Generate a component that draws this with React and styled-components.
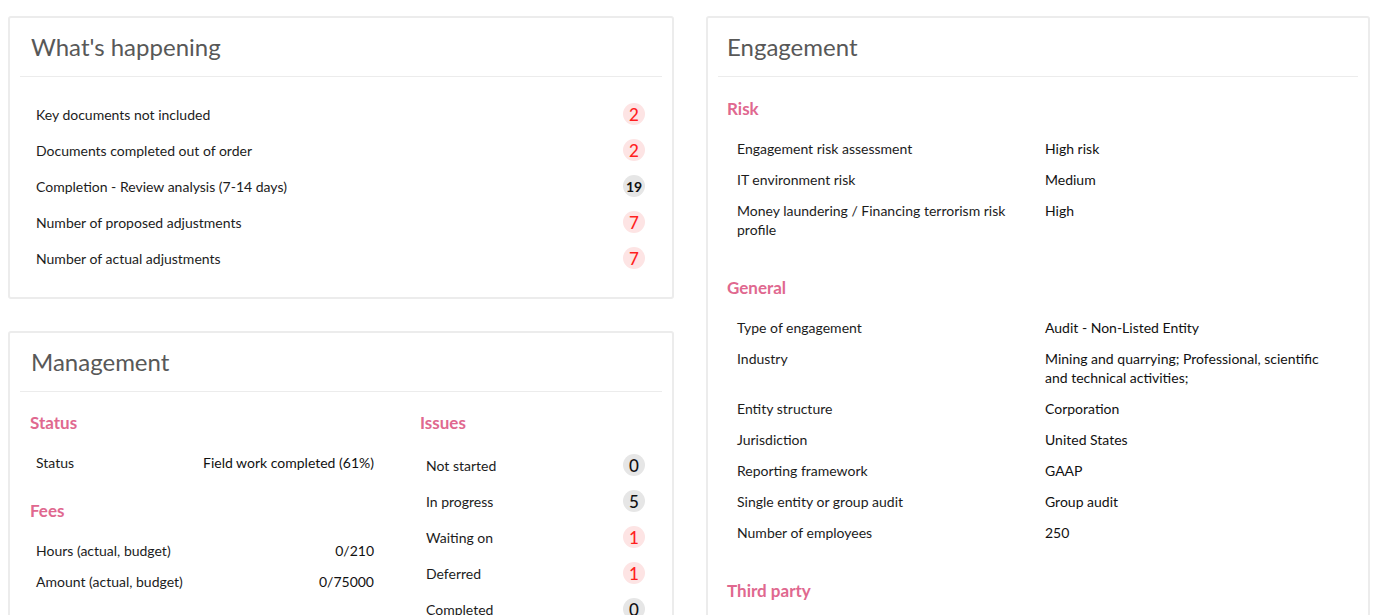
import React from 'react';
import styled, { createGlobalStyle, css } from 'styled-components';

const GlobalStyle = createGlobalStyle`
  body {
    margin: 0;
    background: #fff;
    font-family: Lato, "Open Sans", sans-serif;
    color: #1c1c1c;
  }
`;

const Page = styled.div`
  display: grid;
  grid-template-columns: 666px 664px;
  column-gap: 32px;
  padding: 16px 0 0 8px;
  align-items: start;
`;

const Column = styled.div`
  display: flex;
  flex-direction: column;
  gap: 32px;
`;

const Card = styled.section`
  border: 2px solid #ececec;
  border-radius: 3px;
  background: #fff;
  padding: 0 10px;
`;

const CardHeader = styled.header`
  height: 58px;
  display: flex;
  align-items: center;
  padding: 0 ${({ $indent }) => $indent || '11px'};
  border-bottom: 1px solid #ececec;
`;

const CardTitle = styled.h2`
  margin: 0 0 2px;
  font-size: 24px;
  font-weight: 400;
  color: #585858;
`;

const CardBody = styled.div`
  padding: ${({ $pad }) => $pad || '19px 0 21px'};
`;

const ListRow = styled.div`
  display: flex;
  align-items: center;
  justify-content: space-between;
  height: 36px;
  padding: ${({ $inset }) => $inset || '0 17px 0 16px'};
  font-size: 14px;
`;

const Badge = styled.span`
  width: 22px;
  height: 22px;
  border-radius: 50%;
  display: inline-flex;
  align-items: center;
  justify-content: center;
  font-size: ${({ $small }) => ($small ? '14px' : '17px')};
  font-weight: ${({ $small }) => ($small ? 700 : 500)};
  ${({ $alert }) =>
    $alert
      ? css`
          background: #fde4e4;
          color: #ff1f1f;
        `
      : css`
          background: #e6e6e6;
          color: #111;
        `}
`;

const SectionHeading = styled.h3`
  margin: ${({ $top }) => $top || '20px'} 0 12px;
  padding-left: ${({ $indent }) => $indent || '10px'};
  font-size: 17px;
  line-height: 24px;
  font-weight: 700;
  color: #e0688f;
`;

const TwoCols = styled.div`
  display: grid;
  grid-template-columns: 350px 1fr;
  column-gap: 40px;
  padding: 0 10px 0 10px;
`;

const InfoRow = styled.div`
  display: flex;
  justify-content: space-between;
  padding: 6px 6px;
  font-size: 14px;
  line-height: 19px;
`;

const Value = styled.span`
  color: #111;
`;

const DetailRow = styled.div`
  display: grid;
  grid-template-columns: 300px 1fr;
  column-gap: 8px;
  padding: 6px 20px 6px 19px;
  font-size: 14px;
  line-height: 19px;
`;

const Section = styled.div`
  padding-bottom: ${({ $gap }) => $gap || '11px'};
`;

const happenings = [
  { label: 'Key documents not included', count: 2, alert: true },
  { label: 'Documents completed out of order', count: 2, alert: true },
  { label: 'Completion - Review analysis (7-14 days)', count: 19, alert: false },
  { label: 'Number of proposed adjustments', count: 7, alert: true },
  { label: 'Number of actual adjustments', count: 7, alert: true },
];

const issues = [
  { label: 'Not started', count: 0, alert: false },
  { label: 'In progress', count: 5, alert: false },
  { label: 'Waiting on', count: 1, alert: true },
  { label: 'Deferred', count: 1, alert: true },
  { label: 'Completed', count: 0, alert: false },
];

const risk = [
  ['Engagement risk assessment', 'High risk'],
  ['IT environment risk', 'Medium'],
  ['Money laundering / Financing terrorism risk profile', 'High'],
];

const general = [
  ['Type of engagement', 'Audit - Non-Listed Entity'],
  ['Industry', 'Mining and quarrying; Professional, scientific and technical activities;'],
  ['Entity structure', 'Corporation'],
  ['Jurisdiction', 'United States'],
  ['Reporting framework', 'GAAP'],
  ['Single entity or group audit', 'Group audit'],
  ['Number of employees', '250'],
];

const CountBadge = ({ count, alert }) => (
  <Badge $alert={alert} $small={String(count).length > 1}>{count}</Badge>
);

const App = () => {
  return (
    <>
      <GlobalStyle />
      <Page>
        <Column>
          <Card>
            <CardHeader>
              <CardTitle>What's happening</CardTitle>
            </CardHeader>
            <CardBody>
              {happenings.map((h) => (
                <ListRow key={h.label}>
                  <span>{h.label}</span>
                  <CountBadge count={h.count} alert={h.alert} />
                </ListRow>
              ))}
            </CardBody>
          </Card>

          <Card>
            <CardHeader>
              <CardTitle>Management</CardTitle>
            </CardHeader>
            <CardBody $pad="0 0 20px">
              <TwoCols>
                <div>
                  <SectionHeading $indent="0" $top="19px">Status</SectionHeading>
                  <InfoRow>
                    <span>Status</span>
                    <Value>Field work completed (61%)</Value>
                  </InfoRow>
                  <SectionHeading $indent="0" $top="21px">Fees</SectionHeading>
                  <InfoRow>
                    <span>Hours (actual, budget)</span>
                    <Value>0/210</Value>
                  </InfoRow>
                  <InfoRow>
                    <span>Amount (actual, budget)</span>
                    <Value>0/75000</Value>
                  </InfoRow>
                </div>
                <div>
                  <SectionHeading $indent="0" $top="19px">Issues</SectionHeading>
                  {issues.map((i) => (
                    <ListRow key={i.label} $inset="0 7px 0 6px">
                      <span>{i.label}</span>
                      <CountBadge count={i.count} alert={i.alert} />
                    </ListRow>
                  ))}
                </div>
              </TwoCols>
            </CardBody>
          </Card>
        </Column>

        <Column>
          <Card>
            <CardHeader $indent="9px">
              <CardTitle>Engagement</CardTitle>
            </CardHeader>
            <CardBody $pad="0 0 20px">
              <Section>
                <SectionHeading $indent="9px" $top="20px">Risk</SectionHeading>
                {risk.map(([k, v]) => (
                  <DetailRow key={k}>
                    <span>{k}</span>
                    <Value>{v}</Value>
                  </DetailRow>
                ))}
              </Section>
              <Section>
                <SectionHeading $indent="9px">General</SectionHeading>
                {general.map(([k, v]) => (
                  <DetailRow key={k}>
                    <span>{k}</span>
                    <Value>{v}</Value>
                  </DetailRow>
                ))}
              </Section>
              <Section>
                <SectionHeading $indent="9px" $top="20px">Third party</SectionHeading>
              </Section>
            </CardBody>
          </Card>
        </Column>
      </Page>
    </>
  );
};

export default App;
